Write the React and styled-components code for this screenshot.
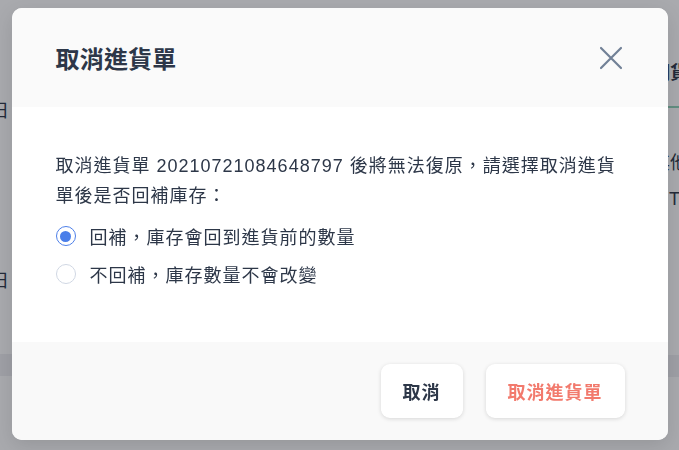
import React, { useState } from 'react';
import styled, { createGlobalStyle } from 'styled-components';

const GlobalStyle = createGlobalStyle`
  html, body {
    margin: 0;
    padding: 0;
    width: 679px;
    height: 450px;
    overflow: hidden;
    background: #ffffff;
    font-family: "Liberation Sans", "Noto Sans CJK TC", sans-serif;
  }
`;

const Page = styled.div`
  width: 679px;
  height: 450px;
  display: flex;
  justify-content: space-between;
  overflow: hidden;
  color: #2d3748;
  font-size: 18px;
`;

const SideColumn = styled.div`
  display: flex;
  flex-direction: column;
  flex-shrink: 0;
  width: 40px;
  margin-left: ${(p) => (p.left ? '-9px' : '0')};
  margin-right: ${(p) => (p.left ? '0' : '-13px')};
  padding-top: ${(p) => p.top}px;
`;

const PageCell = styled.div`
  height: ${(p) => p.h}px;
  display: flex;
  align-items: center;
  white-space: nowrap;
  padding-left: ${(p) => p.indent || 0}px;
  font-weight: ${(p) => (p.bold ? 700 : 400)};
  background: ${(p) => (p.band ? '#efeff2' : 'transparent')};
  border-bottom: ${(p) => (p.line ? '2px solid #8fd3b8' : 'none')};
`;

const Overlay = styled.div`
  position: fixed;
  inset: 0;
  background: rgba(22, 24, 34, 0.37);
  display: flex;
  align-items: center;
  justify-content: center;
`;

const Modal = styled.div`
  width: 656px;
  margin-top: -2px;
  border-radius: 10px;
  overflow: hidden;
  background: #ffffff;
  box-shadow: 0 6px 20px rgba(0, 0, 0, 0.12);
  color: #2d3748;
  font-family: "Liberation Sans", "Noto Sans CJK TC", sans-serif;
`;

const Header = styled.div`
  height: 99px;
  padding: 0 44px 0 44px;
  display: flex;
  align-items: center;
  justify-content: space-between;
  background: #fafafa;
`;

const Title = styled.h2`
  margin: 0;
  font-size: 24px;
  font-weight: 700;
  letter-spacing: 0.2px;
  color: #2d3748;
`;

const CloseButton = styled.button`
  width: 24px;
  height: 24px;
  padding: 0;
  border: none;
  background: none;
  display: flex;
  align-items: center;
  justify-content: center;
  cursor: pointer;
  margin-right: 1px;
`;

const Body = styled.div`
  padding: 44px 44px 49px 44px;
  background: #ffffff;
`;

const Message = styled.p`
  margin: 0 0 6px 0;
  font-size: 18px;
  line-height: 30px;
  letter-spacing: 1px;
`;

const RadioRow = styled.label`
  height: 38px;
  display: flex;
  align-items: center;
  gap: 14px;
  font-size: 18px;
  letter-spacing: 1px;
  cursor: pointer;
`;

const RadioCircle = styled.span`
  width: 20px;
  height: 20px;
  border-radius: 50%;
  box-sizing: border-box;
  border: 1px solid ${(p) => (p.checked ? '#4d7fe8' : '#d0d7e3')};
  display: flex;
  align-items: center;
  justify-content: center;
  flex-shrink: 0;

  &::after {
    content: '';
    width: 11px;
    height: 11px;
    border-radius: 50%;
    background: ${(p) => (p.checked ? '#4a7ee9' : 'transparent')};
  }
`;

const Footer = styled.div`
  height: 98px;
  padding: 0 43px;
  box-sizing: border-box;
  display: flex;
  align-items: center;
  justify-content: flex-end;
  gap: 23px;
  background: #f9f9f9;
`;

const FooterButton = styled.button`
  height: 54px;
  padding: 0 22px;
  border: none;
  border-radius: 9px;
  background: #ffffff;
  box-shadow: 0 1px 4px rgba(0, 0, 0, 0.14);
  font-family: inherit;
  font-size: 18px;
  font-weight: 700;
  letter-spacing: 1px;
  color: ${(p) => (p.danger ? '#f27a6d' : '#2d3748')};
  cursor: pointer;
`;

const options = [
  { id: 'restock', label: '回補，庫存會回到進貨前的數量' },
  { id: 'keep', label: '不回補，庫存數量不會改變' },
];

const App = () => {
  const [choice, setChoice] = useState('restock');

  return (
    <>
      <GlobalStyle />
      <Page>
        <SideColumn left top={94}>
          <PageCell h={30}>日</PageCell>
          <PageCell h={140} />
          <PageCell h={30}>日</PageCell>
          <PageCell h={60} />
          <PageCell h={22} band />
        </SideColumn>
        <SideColumn top={56}>
          <PageCell h={30} bold>期貨</PageCell>
          <PageCell h={20} line />
          <PageCell h={38} />
          <PageCell h={30}>其他</PageCell>
          <PageCell h={8} />
          <PageCell h={30} indent={17}>T</PageCell>
          <PageCell h={141} />
          <PageCell h={22} band />
        </SideColumn>
      </Page>
      <Overlay>
        <Modal>
          <Header>
            <Title>取消進貨單</Title>
            <CloseButton aria-label="close">
              <svg width="24" height="24" viewBox="0 0 24 24" fill="none">
                <path d="M2 2L22 22M22 2L2 22" stroke="#718096" strokeWidth="2.2" strokeLinecap="round" />
              </svg>
            </CloseButton>
          </Header>
          <Body>
            <Message>
              取消進貨單 20210721084648797 後將無法復原，請選擇取消進貨單後是否回補庫存：
            </Message>
            {options.map((o) => (
              <RadioRow key={o.id} onClick={() => setChoice(o.id)}>
                <RadioCircle checked={choice === o.id} />
                {o.label}
              </RadioRow>
            ))}
          </Body>
          <Footer>
            <FooterButton>取消</FooterButton>
            <FooterButton danger>取消進貨單</FooterButton>
          </Footer>
        </Modal>
      </Overlay>
    </>
  );
};

export default App;
